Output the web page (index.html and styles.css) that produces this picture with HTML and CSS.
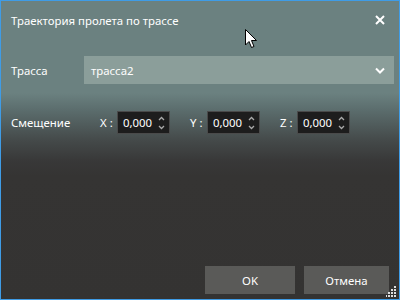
FILE: index.html
```html
<!DOCTYPE html>
<html lang="ru">
<head>
<meta charset="utf-8">
<link rel="stylesheet" href="styles.css">
</head>
<body>
<div class="window">
  <div class="titlebar">
    <span class="title">Траектория пролета по трассе</span>
    <svg class="close" width="10" height="10" viewBox="0 0 10 10"><path d="M1 1 L9 9 M9 1 L1 9" stroke="#fff" stroke-width="2"/></svg>
  </div>
  <div class="content">
    <div class="row route">
      <span class="label">Трасса</span>
      <div class="combo">
        <span>трасса2</span>
        <svg width="10" height="7" viewBox="0 0 10 7"><path d="M1 1.5 L5 5.5 L9 1.5" stroke="#fff" stroke-width="2" fill="none"/></svg>
      </div>
    </div>
    <div class="row offset">
      <span class="label">Смещение</span>
      <div class="coord">
        <span class="axis">X :</span>
        <div class="spin"><span>0,000</span><svg width="7" height="18" viewBox="0 0 7 18"><path d="M1 6 L3.5 3.5 L6 6" stroke="#aaa" stroke-width="1.3" fill="none"/><path d="M1 12 L3.5 14.5 L6 12" stroke="#aaa" stroke-width="1.3" fill="none"/></svg></div>
      </div>
      <div class="coord">
        <span class="axis">Y :</span>
        <div class="spin"><span>0,000</span><svg width="7" height="18" viewBox="0 0 7 18"><path d="M1 6 L3.5 3.5 L6 6" stroke="#aaa" stroke-width="1.3" fill="none"/><path d="M1 12 L3.5 14.5 L6 12" stroke="#aaa" stroke-width="1.3" fill="none"/></svg></div>
      </div>
      <div class="coord">
        <span class="axis">Z :</span>
        <div class="spin"><span>0,000</span><svg width="7" height="18" viewBox="0 0 7 18"><path d="M1 6 L3.5 3.5 L6 6" stroke="#aaa" stroke-width="1.3" fill="none"/><path d="M1 12 L3.5 14.5 L6 12" stroke="#aaa" stroke-width="1.3" fill="none"/></svg></div>
      </div>
    </div>
  </div>
  <div class="footer">
    <button class="btn">OK</button>
    <button class="btn">Отмена</button>
  </div>
  <svg class="grip" width="11" height="11" viewBox="0 0 11 11" fill="#ddd">
    <rect x="8" y="0" width="2" height="2"/>
    <rect x="5" y="3" width="2" height="2"/><rect x="8" y="3" width="2" height="2"/>
    <rect x="2" y="6" width="2" height="2"/><rect x="5" y="6" width="2" height="2"/><rect x="8" y="6" width="2" height="2"/>
    <rect x="-1" y="9" width="2" height="2"/><rect x="2" y="9" width="2" height="2"/><rect x="5" y="9" width="2" height="2"/><rect x="8" y="9" width="2" height="2"/>
  </svg>
  <svg class="cursor" width="13" height="20" viewBox="0 0 13 20"><path d="M0.5 0.5 L0.5 16 L4 12.5 L6.5 18.5 L9 17.5 L6.5 11.5 L11.5 11.5 Z" fill="#fff" stroke="#000" stroke-width="1"/></svg>
</div>
</body>
</html>
```
FILE: styles.css
```css
* { box-sizing: border-box; }
body { margin: 0; font-family: "Noto Sans", "Open Sans", sans-serif; color: #fff; }
.window {
  position: relative;
  width: 400px; height: 300px;
  border: 1px solid #3f9ce6;
  background: linear-gradient(to bottom, #6b8180 0px, #6b8180 92px, #5c6e6e 108px, #444949 140px, #383838 160px, #353433 175px, #343332 300px);
  display: flex; flex-direction: column;
  font-size: 11.4px;
}
.titlebar {
  height: 40px;
  display: flex; align-items: center; justify-content: space-between;
  padding: 0 14px 2px 10px;
}
.title { font-size: 11.4px; }
.content { flex: 1; padding: 15px 5px 0 10px; }
.row { display: flex; align-items: center; }
.route { height: 28px; }
.label { width: 73px; }
.combo {
  flex: 1; height: 28px;
  background: #8b9e9a;
  display: flex; align-items: center; justify-content: space-between;
  padding: 0 9px 0 7px;
}
.offset { margin-top: 27px; height: 23px; }
.offset .label { width: 89px; }
.coord { display: flex; align-items: center; margin-right: 20px; }
.axis { width: 17px; }
.spin {
  width: 53px; height: 23px;
  background: #1d1d1d;
  border: 1px solid #4a4a4a;
  display: flex; align-items: center; justify-content: space-between;
  padding: 0 4px 0 5px;
}
.footer {
  display: flex; justify-content: flex-end; gap: 9px;
  padding: 0 10px 5px 0;
}
.btn {
  width: 90px; height: 28px;
  background: #5a5a58;
  border: none; color: #fff;
  font-family: inherit; font-size: 11.4px;
}
.btn + .btn { width: 85px; }
.grip { position: absolute; right: 2px; bottom: 2px; }
.cursor { position: absolute; left: 244px; top: 28px; }
```
